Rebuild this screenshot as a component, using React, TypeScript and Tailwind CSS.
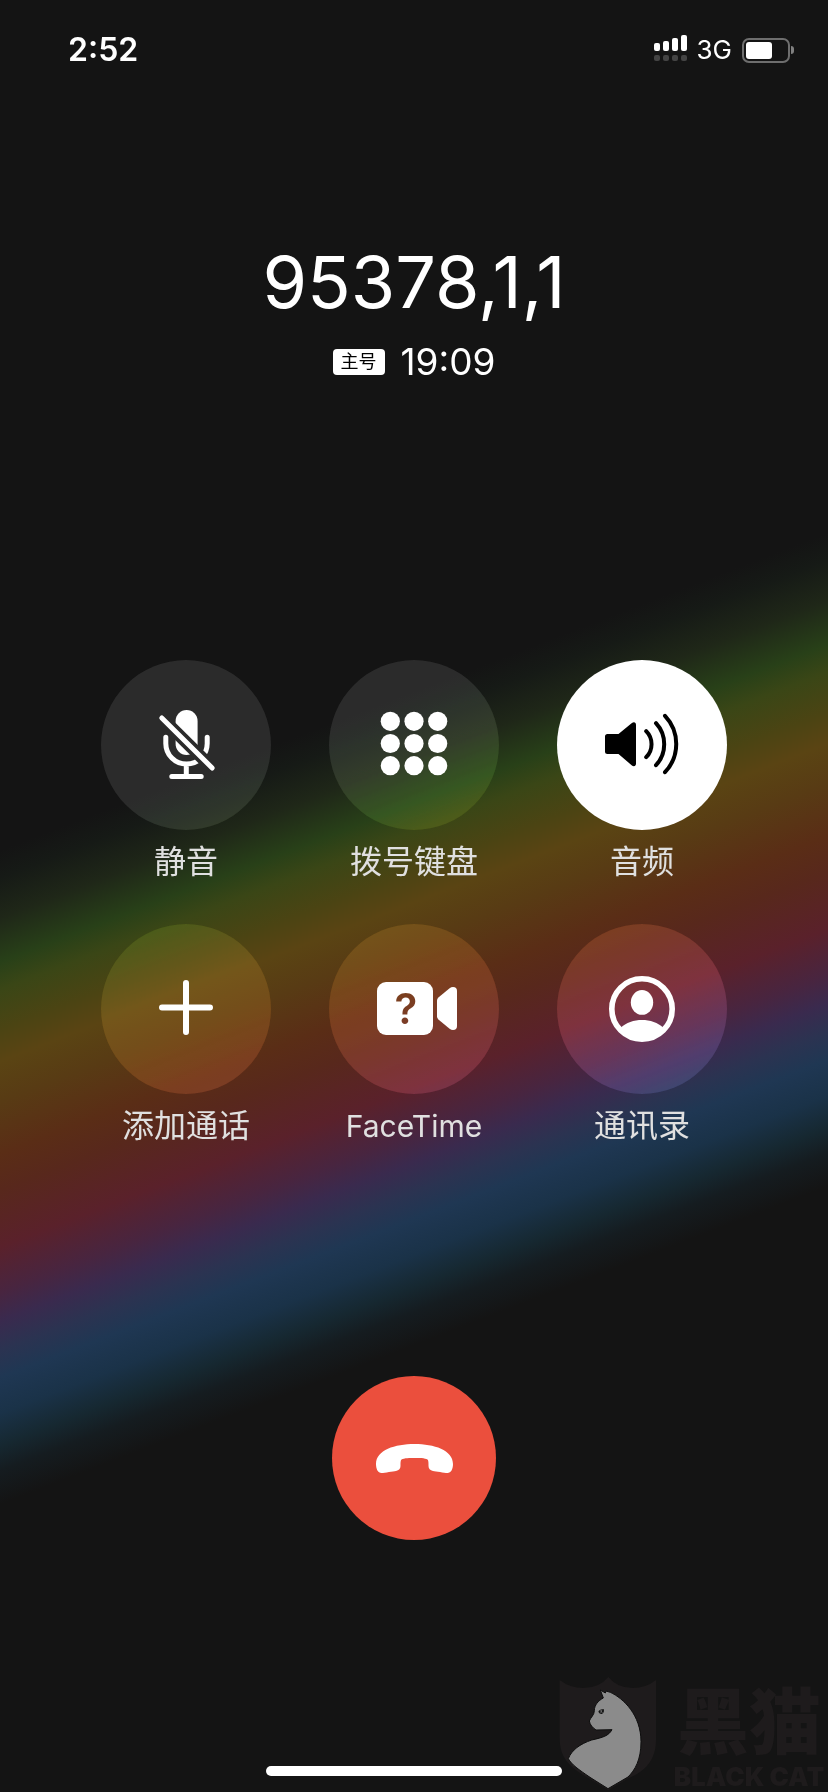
import { useState, type ReactNode } from "react";

type Action = {
  id: string;
  label: string;
  labelSize: string;
  icon: ReactNode;
};

const MicOffIcon = () => (
  <svg viewBox="0 0 170 170" className="size-full" fill="none" aria-hidden="true">
    <mask id="mic-slash" maskUnits="userSpaceOnUse" x="0" y="0" width="170" height="170">
      <rect width="170" height="170" fill="#fff" />
      <path d="M52 49.4 120 116.6" stroke="#000" strokeWidth="12.5" />
    </mask>
    <g mask="url(#mic-slash)">
      <rect x="74.6" y="50" width="22" height="45" rx="11" fill="currentColor" />
      <path
        d="M64.8 77.3V83.4a20.7 20.7 0 0 0 41.4 0V77.3M85.3 104v12"
        stroke="currentColor"
        strokeWidth="5"
        strokeLinecap="round"
      />
    </g>
    <path d="M70.8 116.6h29.4M60.8 58 111.2 108" stroke="currentColor" strokeWidth="5" strokeLinecap="round" />
  </svg>
);

const KeypadIcon = () => (
  <svg viewBox="0 0 170 170" className="size-full" fill="currentColor" aria-hidden="true">
    {[61.3, 83.5, 105.7].map((cy) =>
      [61.3, 85, 108.7].map((cx) => <circle key={`${cx}-${cy}`} cx={cx} cy={cy} r="9.6" />)
    )}
  </svg>
);

const SpeakerIcon = () => (
  <svg viewBox="0 0 170 170" className="size-full" fill="none" aria-hidden="true">
    <path
      d="M50.5 74H61.5L74.6 63.2C76.8 61.4 79 62 79 65V103.4C79 106.2 76.8 107 74.6 105.2L61.5 94H50.5Q48 94 48 91.5V76.5Q48 74 50.5 74Z"
      fill="currentColor"
    />
    <path
      d="M89.2 71.2a18.5 18.5 0 0 1 0 26M99 63.2a31 31 0 0 1 0 42M108 55.8a41 41 0 0 1 0 56.4"
      stroke="currentColor"
      strokeWidth="4"
      strokeLinecap="round"
    />
  </svg>
);

const PlusIcon = () => (
  <svg viewBox="0 0 170 170" className="size-full" fill="none" aria-hidden="true">
    <path d="M85 59v49M61 83.5h48" stroke="currentColor" strokeWidth="6" strokeLinecap="round" />
  </svg>
);

const VideoIcon = () => (
  <svg viewBox="0 0 170 170" className="size-full" fill="currentColor" aria-hidden="true">
    <mask id="video-mark" maskUnits="userSpaceOnUse" x="0" y="0" width="170" height="170">
      <rect width="170" height="170" fill="#fff" />
      <text x="77" y="100" textAnchor="middle" fill="#000" className="font-['Inter'] text-[42px] font-semibold">
        ?
      </text>
    </mask>
    <rect x="48" y="58" width="56" height="53" rx="9" mask="url(#video-mark)" />
    <path d="M108 76.3Q108 74.7 109.4 73.4L120.6 64.2Q122.2 63 124 63Q128 63 128 67V102Q128 106 124 106Q122.2 106 120.6 104.8L109.4 95.4Q108 94.2 108 92.5Z" />
  </svg>
);

const ContactIcon = () => (
  <svg viewBox="0 0 170 170" className="size-full" fill="currentColor" aria-hidden="true">
    <circle cx="85" cy="85" r="30.2" fill="none" stroke="currentColor" strokeWidth="5.6" />
    <ellipse cx="85" cy="78.4" rx="11.2" ry="12.4" />
    <path d="M63.5 104C69 98.6 77 96 85 96S101 98.6 106.5 104A29 29 0 0 1 63.5 104Z" />
  </svg>
);

const HangUpIcon = () => (
  <svg viewBox="0 0 164 164" className="size-full" fill="currentColor" aria-hidden="true">
    <path d="M82.5 68C102 68 121 74 121 88C121 93 119 97 115.5 97C112 96.8 104 95.5 101 95C98 94.5 96.5 92.5 96.5 90C96.5 87 96.6 84.5 95.5 83.5C93 82 87 82 82.5 82S72 82 69.5 83.5C68.4 84.5 68.5 87 68.5 90C68.5 92.5 67 94.5 64 95C61 95.5 53 96.8 49.5 97C46 97 44 93 44 88C44 74 63 68 82.5 68Z" />
  </svg>
);

const ACTIONS: Action[] = [
  { id: "mute", label: "静音", labelSize: "text-[32px]", icon: <MicOffIcon /> },
  { id: "keypad", label: "拨号键盘", labelSize: "text-[32px]", icon: <KeypadIcon /> },
  { id: "audio", label: "音频", labelSize: "text-[32px]", icon: <SpeakerIcon /> },
  { id: "add", label: "添加通话", labelSize: "text-[32px]", icon: <PlusIcon /> },
  { id: "facetime", label: "FaceTime", labelSize: "text-[30px]", icon: <VideoIcon /> },
  { id: "contacts", label: "通讯录", labelSize: "text-[32px]", icon: <ContactIcon /> },
];

const SIGNAL = ["h-2", "h-[10px]", "h-[13px]", "h-4"];

function StatusBar() {
  return (
    <header className="flex h-[100px] items-center justify-between pl-[68px] pr-[34px]">
      <time className="text-[32px] leading-10 font-semibold">2:52</time>
      <div className="flex items-center gap-[10px]">
        <div className="flex items-end gap-[3px] pb-1">
          {SIGNAL.map((height) => (
            <div key={height} className="flex flex-col gap-1">
              <span className={`w-[6px] rounded-[2px] bg-white ${height}`} />
              <span className="size-[6px] rounded-[2px] bg-[#444]" />
            </div>
          ))}
        </div>
        <span className="text-[26px] leading-8">3G</span>
        <div className="flex items-center gap-px">
          <div className="h-[25px] w-12 rounded-[7px] border-2 border-[#6e6e6e] p-[2px]">
            <div className="h-full w-[26px] rounded-[3px] bg-white" />
          </div>
          <span className="h-2 w-[3px] rounded-r-full bg-[#808080]" />
        </div>
      </div>
    </header>
  );
}

function Watermark() {
  return (
    <div className="absolute right-[3px] bottom-0 flex items-end gap-4 text-[#1e1b1c]">
      <svg viewBox="57 51 294 345" className="h-[115px] w-[98px]" aria-hidden="true">
        <path
          d="M59 60Q90 84 130 84Q178 84 205 51Q232 84 278 84Q318 84 348 60V240C348 300 315 335 265 355L205 390L130 345C80 315 59 285 59 235Z"
          fill="currentColor"
        />
        <path
          d="M181 90L196 99L198 93L211 97C250 115 303 165 303 245C303 300 285 330 264 351L204 386L150 352C115 328 95 314 85 296C95 270 120 252 155 240C190 232 205 228 216 209L168 210C158 203 150 195 148 183C152 172 163 165 163 152C163 135 175 122 190 114Z"
          fill="#8b8b8b"
          stroke="#0e0e0e"
          strokeWidth="3"
        />
        <path d="M175 155Q179 147 191 147Q194 157 186 162Q179 163 175 155Z" fill="#111" />
        <path d="M181 151L188 160M186 149L182 158" stroke="#8b8b8b" strokeWidth="2" />
      </svg>
      <div className="flex w-[152px] flex-col items-center whitespace-nowrap">
        <p className="text-7xl leading-[80px] font-black">黑猫</p>
        <p className="text-[26px] leading-[30px] font-black">BLACK CAT</p>
      </div>
    </div>
  );
}

export default function App() {
  const [active, setActive] = useState<string[]>(["audio"]);

  const toggle = (id: string) =>
    setActive((cur) => (cur.includes(id) ? cur.filter((a) => a !== id) : [...cur, id]));

  return (
    <div className="relative flex min-h-screen flex-col overflow-hidden bg-[#141414] bg-[linear-gradient(159deg,#141414_40.3%,#161a16_41.6%,#1f2718_43.5%,#284018_45.6%,#3a4616_46.9%,#4b4413_48.8%,#5a4413_50.3%,#583b14_52.2%,#5a2d16_54.7%,#58281c_56.4%,#5a212b_59.1%,#482540_61.3%,#3a2a4e_62.6%,#2b3351_64%,#1f3753_65.3%,#1a3248_67%,#162831_68.5%,#151c20_69.7%,#141414_71.3%)] font-['Inter','Noto_Sans_CJK_SC',sans-serif] text-white">
      <StatusBar />

      <main className="flex flex-1 flex-col">
        <section className="flex flex-col items-center pt-[138px]">
          <h1 className="text-7xl leading-[88px]">95378,1,1</h1>
          <div className="mt-4 flex items-center gap-4">
            <span className="flex h-[26px] items-center rounded-sm bg-white px-2 text-lg text-black">主号</span>
            <time className="text-[37px] leading-10">19:09</time>
          </div>
        </section>

        <section className="mt-[278px] grid grid-cols-3 gap-y-[38px] px-[72px]">
          {ACTIONS.map((action) => {
            const on = active.includes(action.id);
            return (
              <div key={action.id} className="flex flex-col items-center gap-2">
                <button
                  type="button"
                  id={action.id}
                  aria-labelledby={`${action.id}-label`}
                  aria-pressed={on}
                  onClick={() => toggle(action.id)}
                  className={`size-[170px] rounded-full ${
                    on ? "bg-white text-black" : "bg-white/10 text-white backdrop-saturate-150"
                  }`}
                >
                  {action.icon}
                </button>
                <label
                  id={`${action.id}-label`}
                  htmlFor={action.id}
                  className={`leading-[48px] text-[#e0e0e0] ${action.labelSize}`}
                >
                  {action.label}
                </label>
              </div>
            );
          })}
        </section>
      </main>

      <footer className="flex flex-col items-center pb-4">
        <button type="button" aria-label="结束通话" className="size-[164px] rounded-full bg-[#eb4f3d]">
          <HangUpIcon />
        </button>
        <div className="mt-[226px] h-[10px] w-[296px] rounded-full bg-white" />
      </footer>

      <Watermark />
    </div>
  );
}
